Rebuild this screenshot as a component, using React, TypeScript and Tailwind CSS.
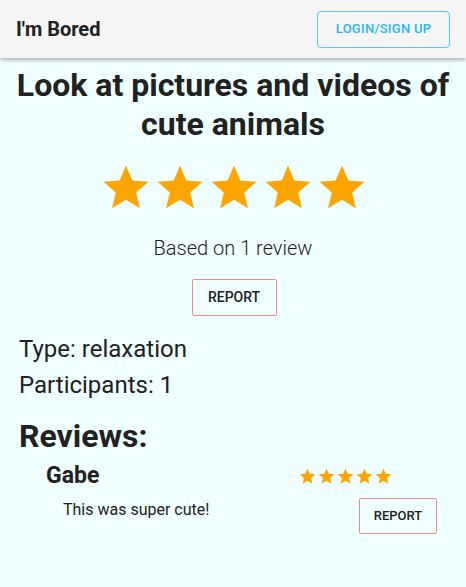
import React from "react";

const Star = ({ size }: { size: number }) => (
  <svg width={size} height={size} viewBox="0 0 24 24" fill="#ffa500">
    <path d="M12 17.27 18.18 21l-1.64-7.03L22 9.24l-7.19-.61L12 2 9.19 8.63 2 9.24l5.46 4.73L5.82 21z" />
  </svg>
);

export default function App() {
  return (
    <div className="min-h-[587px] bg-[#f0ffff] text-[#212121]" style={{ fontFamily: "Roboto, 'Liberation Sans', sans-serif" }}>
      <header className="h-[58px] bg-[#f5f5f5] shadow-[0_2px_4px_rgba(0,0,0,0.3)] flex items-center justify-between pl-4 pr-4 relative z-10">
        <div className="text-[20px] font-bold leading-none">I'm Bored</div>
        <button className="w-[133px] h-[37px] border border-[#5bc4f2] rounded text-[#29b6f6] text-[13px] font-medium uppercase tracking-[0.02em]">
          Login/Sign up
        </button>
      </header>
      <main className="flex flex-col">
        <h1 className="text-[32px] font-bold text-center leading-[39px] mt-[8px] px-1">
          Look at pictures and videos of cute animals
        </h1>
        <div className="flex justify-center gap-0 mt-[17px] ml-[2px]">
          {[0, 1, 2, 3, 4].map((i) => (
            <Star key={i} size={54} />
          ))}
        </div>
        <div className="text-center text-[20px] font-light mt-[21px] leading-[24px]">Based on 1 review</div>
        <div className="flex justify-center mt-[19px] ml-[2px]">
          <button className="w-[85px] h-[37px] border border-[#f08a84] rounded-[2px] text-[14px] font-medium uppercase">
            Report
          </button>
        </div>
        <div className="pl-[19px] mt-[15px] text-[24px] leading-[36px]">
          <div>Type: relaxation</div>
          <div>Participants: 1</div>
        </div>
        <h2 className="pl-[19px] text-[32px] font-bold leading-[40px] mt-[13px]">Reviews:</h2>
        <div className="flex justify-between pl-[46px] pr-[29px] mt-[6px]">
          <div className="flex flex-col">
            <div className="text-[23px] font-bold leading-[28px]">Gabe</div>
            <div className="pl-[17px] text-[16px] leading-[20px] mt-[10px]">This was super cute!</div>
          </div>
          <div className="flex flex-col items-end">
            <div className="flex mr-[44px] mt-[5px]">
              {[0, 1, 2, 3, 4].map((i) => (
                <Star key={i} size={19} />
              ))}
            </div>
            <button className="mt-[12px] w-[78px] h-[36px] border border-[#f08a84] rounded-[2px] text-[13px] font-medium uppercase">
              Report
            </button>
          </div>
        </div>
      </main>
    </div>
  );
}
